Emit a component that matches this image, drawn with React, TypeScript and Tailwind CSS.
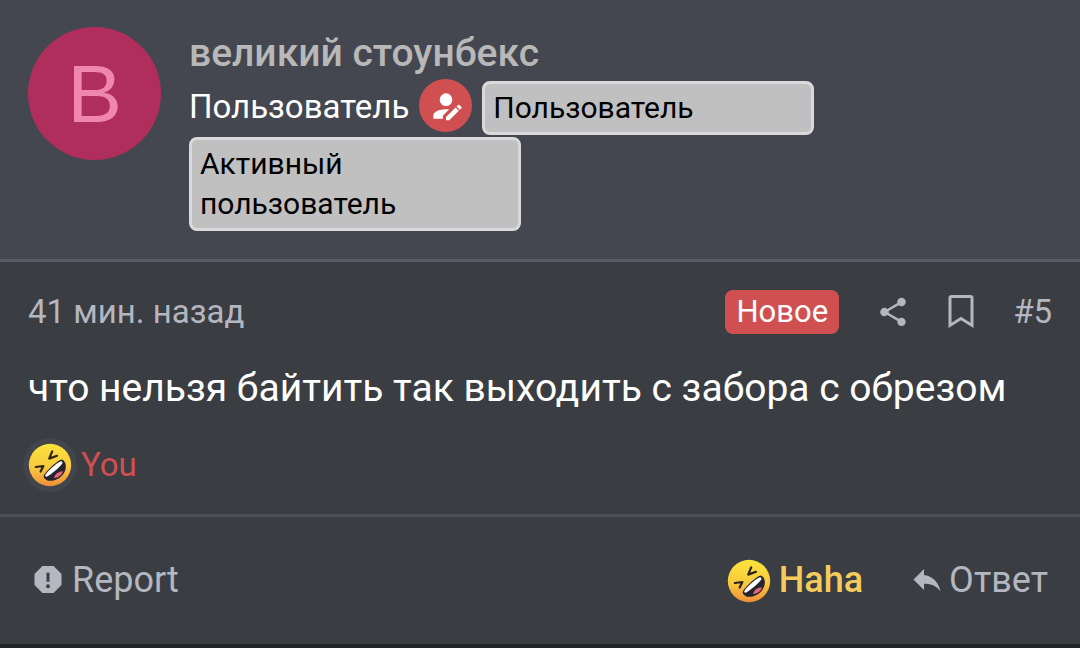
import type { ReactNode } from "react";

function Icon({ d, className }: { d: string; className: string }) {
  return (
    <svg viewBox="0 0 24 24" fill="currentColor" aria-hidden="true" className={className}>
      <path d={d} />
    </svg>
  );
}

const icons = {
  accountEdit:
    "M21.7 13.35L20.7 14.35L18.65 12.3L19.65 11.3C19.86 11.09 20.21 11.09 20.42 11.3L21.7 12.58C21.91 12.79 21.91 13.14 21.7 13.35M12 18.94L18.06 12.88L20.11 14.93L14.06 21H12V18.94M12 14C7.58 14 4 15.79 4 18V20H10V18.11L14 14.11C13.34 14.03 12.67 14 12 14M12 4A4 4 0 0 0 8 8A4 4 0 0 0 12 12A4 4 0 0 0 16 8A4 4 0 0 0 12 4Z",
  share:
    "M18 16.08C17.24 16.08 16.56 16.38 16.04 16.85L8.91 12.7C8.96 12.47 9 12.24 9 12S8.96 11.53 8.91 11.3L15.96 7.19C16.5 7.69 17.21 8 18 8A3 3 0 0 0 21 5A3 3 0 0 0 18 2A3 3 0 0 0 15 5C15 5.24 15.04 5.47 15.09 5.7L8.04 9.81C7.5 9.31 6.79 9 6 9A3 3 0 0 0 3 12A3 3 0 0 0 6 15C6.79 15 7.5 14.69 8.04 14.19L15.16 18.34C15.11 18.55 15.08 18.77 15.08 19C15.08 20.61 16.39 21.91 18 21.91S20.92 20.61 20.92 19A2.92 2.92 0 0 0 18 16.08Z",
  alertOctagon:
    "M13 12.5H11V6.5H13M12 16.8A1.3 1.3 0 0 1 10.7 15.5A1.3 1.3 0 0 1 12 14.2A1.3 1.3 0 0 1 13.3 15.5A1.3 1.3 0 0 1 12 16.8M15.73 2H8.27L3 7.27V14.73L8.27 20H15.73L21 14.73V7.27L15.73 2Z",
  reply:
    "M10 8V4L3 11L10 18V13.9C15 13.9 18.5 15.5 21 19C20 14 17 9 10 8Z",
};

function HahaEmoji({ id }: { id: string }) {
  return (
    <svg viewBox="0 0 44 44" className="size-11 shrink-0" aria-hidden="true">
      <defs>
        <linearGradient id={id} x1="0" y1="0" x2="0" y2="1">
          <stop offset="0" stopColor="#fbe33c" />
          <stop offset="0.55" stopColor="#f9ca3d" />
          <stop offset="1" stopColor="#f08f38" />
        </linearGradient>
      </defs>
      <circle cx="22" cy="22" r="21.2" fill={`url(#${id})`} />
      <g fill="none" stroke="#2b2416" strokeWidth="2.2" strokeLinecap="round" strokeLinejoin="round">
        <path d="M24.2 8.4L21.2 15.6L29 12.8" />
        <path d="M7.8 24L15.4 23L12.6 28.6" />
      </g>
      <path d="M15.6 33.4C15.6 30 30 16.4 34 16.4C38.6 18.4 39.4 26 34.6 32C29 38.4 17.6 40.4 15.6 33.4Z" fill="#24232f" />
      <path d="M17.2 32.6C17.4 29.8 30 18.4 33.2 18.2C34.2 18.4 34.6 19.4 34.4 20.6C31.4 24.6 24 31 18.8 33.8C18 34 17.4 33.6 17.2 32.6Z" fill="#fff" />
      <path d="M26 35C26.4 31.6 30.4 28.2 35 28.2C34 32 30.6 34.8 26 35Z" fill="#e4637d" />
    </svg>
  );
}

function Banner({ children }: { children: ReactNode }) {
  return (
    <em className="mt-0.5 block w-[332px] rounded-lg border-3 border-[#d9d9d9] bg-[#c0c0c0] px-2 py-1 text-[30px] leading-10 text-black not-italic">
      {children}
    </em>
  );
}

export default function App() {
  return (
    <div className="min-h-screen bg-[#212327] font-[Roboto,sans-serif] text-[#b4b7c0]">
      <article className="bg-[#3a3d42]">
        <header className="flex items-start gap-7 border-b-3 border-[#575a63] bg-[#44474f] px-7 pt-[27px] pb-7">
          <a
            href="#member"
            className="flex size-[133px] shrink-0 items-center justify-center rounded-full bg-[#b02e5c] font-['Liberation_Sans',sans-serif] text-[82px] leading-none text-[#f085ad]"
          >
            В
          </a>
          <div className="min-w-0">
            <h4 className="text-[39px] leading-[52px] font-medium text-[#b8b8b8]">
              <a href="#member">великий стоунбекс</a>
            </h4>
            <div className="flex flex-wrap items-start gap-x-[10px]">
              <h5 className="text-[33px] leading-14 text-white">Пользователь</h5>
              <span className="flex size-[53px] items-center justify-center rounded-full bg-[#d05052] text-white">
                <Icon d={icons.accountEdit} className="size-[38px]" />
              </span>
              <Banner>Пользователь</Banner>
              <Banner>Активный пользователь</Banner>
            </div>
          </div>
        </header>

        <div className="flex items-center justify-between px-7 pt-7 text-[33px] leading-11">
          <a href="#post-5">
            <time>41 мин. назад</time>
          </a>
          <ul className="flex items-center">
            <li className="rounded-lg bg-[#d05052] px-[11px] text-[31px] text-white">Новое</li>
            <li className="ml-9">
              <button type="button" aria-label="Share" className="flex size-9 items-center justify-center">
                <Icon d={icons.share} className="size-[34px]" />
              </button>
            </li>
            <li className="ml-9">
              <button type="button" aria-label="Bookmark" className="flex h-9 w-7 items-center justify-center">
                <svg
                  viewBox="0 0 28 36"
                  fill="none"
                  stroke="currentColor"
                  strokeWidth="3"
                  strokeLinejoin="miter"
                  className="h-9 w-7"
                  aria-hidden="true"
                >
                  <path d="M3 31.4V3.5Q3 2.5 4.5 2.5H23.5Q25 2.5 25 3.5V31.4L14 24.5Z" />
                </svg>
              </button>
            </li>
            <li className="ml-[38px]">
              <a href="#post-5">#5</a>
            </li>
          </ul>
        </div>

        <p className="px-7 pt-[26px] text-[39px] leading-14 text-white">
          что нельзя байтить так выходить с забора с обрезом
        </p>

        <div className="flex items-center gap-1 px-[23px] py-[22px]">
          <span className="flex size-[54px] items-center justify-center rounded-full bg-[#42454c]">
            <HahaEmoji id="reaction-summary" />
          </span>
          <a href="#reactions" className="text-[33px] leading-11 text-[#d05052]">
            You
          </a>
        </div>

        <footer className="flex items-center justify-between border-t-3 border-[#4d5057] py-10 pr-8 pl-[30px] text-[36px] leading-[47px]">
          <a href="#report" className="flex items-center gap-1.5">
            <Icon d={icons.alertOctagon} className="size-9" />
            Report
          </a>
          <div className="flex items-center gap-[46px]">
            <button type="button" className="flex items-center gap-2 font-medium text-[#f5cb5c]">
              <HahaEmoji id="reaction-button" />
              Haha
            </button>
            <a href="#reply" className="flex items-center gap-1">
              <Icon d={icons.reply} className="size-9" />
              Ответ
            </a>
          </div>
        </footer>
      </article>
    </div>
  );
}
